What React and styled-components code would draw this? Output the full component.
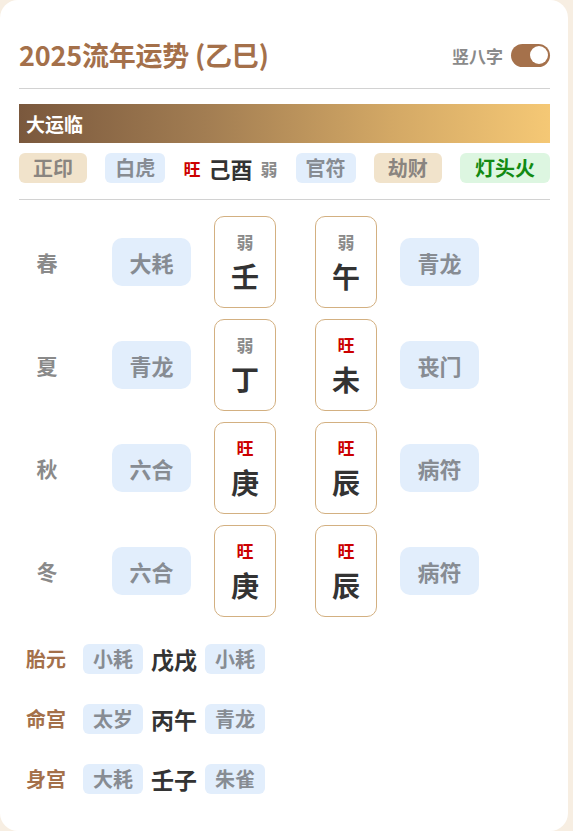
import styled, { createGlobalStyle } from 'styled-components';

const GlobalStyle = createGlobalStyle`
  html, body {
    margin: 0;
    padding: 0;
    background: #f7eee2;
  }
  body {
    font-family: "Noto Sans CJK SC", "Noto Sans", sans-serif;
  }
`;

const seasons = [
  { name: '春', left: '大耗', right: '青龙', stem: ['弱', '壬'], branch: ['弱', '午'] },
  { name: '夏', left: '青龙', right: '丧门', stem: ['弱', '丁'], branch: ['旺', '未'] },
  { name: '秋', left: '六合', right: '病符', stem: ['旺', '庚'], branch: ['旺', '辰'] },
  { name: '冬', left: '六合', right: '病符', stem: ['旺', '庚'], branch: ['旺', '辰'] },
];

const palaces = [
  { name: '胎元', left: '小耗', pillar: '戊戌', right: '小耗' },
  { name: '命宫', left: '太岁', pillar: '丙午', right: '青龙' },
  { name: '身宫', left: '大耗', pillar: '壬子', right: '朱雀' },
];

export default function App() {
  return (
    <>
      <GlobalStyle />
      <Card>
        <Header>
          <Title>2025流年运势 (乙巳)</Title>
          <ToggleWrap>
            <span>竖八字</span>
            <Toggle>
              <Knob />
            </Toggle>
          </ToggleWrap>
        </Header>
        <Divider />

        <Banner>大运临</Banner>
        <TagRow>
          <Tag $tone="beige" $pad={14}>正印</Tag>
          <Tag $tone="blue" $pad={10}>白虎</Tag>
          <DayunPillar>
            <Strength $strong>旺</Strength>
            <PillarText>己酉</PillarText>
            <Strength>弱</Strength>
          </DayunPillar>
          <Tag $tone="blue" $pad={10}>官符</Tag>
          <Tag $tone="beige" $pad={14}>劫财</Tag>
          <Tag $tone="green" $pad={15}>灯头火</Tag>
        </TagRow>
        <Divider />

        <SeasonGrid>
          {seasons.map((s) => (
            <SeasonRow key={s.name}>
              <SeasonLabel>{s.name}</SeasonLabel>
              <ShenTag>{s.left}</ShenTag>
              <PillarPair>
                {[s.stem, s.branch].map(([st, ch], i) => (
                  <PillarBox key={i}>
                    <BoxStrength $strong={st === '旺'}>{st}</BoxStrength>
                    <BoxChar>{ch}</BoxChar>
                  </PillarBox>
                ))}
              </PillarPair>
              <ShenTag>{s.right}</ShenTag>
            </SeasonRow>
          ))}
        </SeasonGrid>

        <PalaceList>
          {palaces.map((p) => (
            <PalaceRow key={p.name}>
              <PalaceLabel>{p.name}</PalaceLabel>
              <Tag $tone="blue" $pad={10}>{p.left}</Tag>
              <PalacePillar>{p.pillar}</PalacePillar>
              <Tag $tone="blue" $pad={10}>{p.right}</Tag>
            </PalaceRow>
          ))}
        </PalaceList>
      </Card>
    </>
  );
}

const tones = {
  beige: { bg: '#f1e3cb', fg: '#8a8580' },
  blue: { bg: '#e2eefc', fg: '#878c93' },
  green: { bg: '#ddf6e1', fg: '#128a12' },
};

const Card = styled.div`
  width: 568px;
  box-sizing: border-box;
  background: #fff;
  border-radius: 18px;
  padding: 37px 18px 37px 19px;
`;

const Header = styled.div`
  height: 36px;
  display: flex;
  align-items: center;
  justify-content: space-between;
`;

const Title = styled.h1`
  margin: 0;
  font-size: 27px;
  font-weight: 700;
  color: #a4704a;
  line-height: 36px;
  letter-spacing: -0.2px;
`;

const ToggleWrap = styled.div`
  display: flex;
  align-items: center;
  gap: 8px;
  font-size: 17px;
  font-weight: 700;
  color: #8a8a8a;
`;

const Toggle = styled.div`
  width: 39px;
  height: 23px;
  border-radius: 12px;
  background: #a5714b;
  display: flex;
  align-items: center;
  justify-content: flex-end;
  padding: 0 2px;
  box-sizing: border-box;
`;

const Knob = styled.div`
  width: 18px;
  height: 18px;
  border-radius: 50%;
  background: #fff;
`;

const Divider = styled.div`
  height: 1px;
  background: #d2d2d2;
  margin-top: 15px;
`;

const Banner = styled.div`
  margin-top: 15px;
  height: 39px;
  display: flex;
  align-items: center;
  padding-left: 7px;
  background: linear-gradient(90deg, #7a583d 0%, #a27d52 35%, #d3a865 70%, #f5c875 100%);
  color: #fff;
  font-size: 19px;
  font-weight: 700;
`;

const TagRow = styled.div`
  margin-top: 9px;
  margin-bottom: 3px;
  display: flex;
  align-items: center;
  justify-content: space-between;
`;

const Tag = styled.span`
  height: 30px;
  display: inline-flex;
  align-items: center;
  justify-content: center;
  padding: 0 ${(p) => p.$pad}px;
  border-radius: 6px;
  background: ${(p) => tones[p.$tone].bg};
  color: ${(p) => tones[p.$tone].fg};
  font-size: 20px;
  font-weight: 700;
  line-height: 1;
`;

const DayunPillar = styled.div`
  display: flex;
  align-items: center;
  gap: 8px;
`;

const Strength = styled.span`
  font-size: 17px;
  font-weight: 700;
  color: ${(p) => (p.$strong ? '#cc0000' : '#8a8a8a')};
`;

const PillarText = styled.span`
  font-size: 22px;
  font-weight: 700;
  color: #333;
`;

const SeasonGrid = styled.div`
  margin-top: 16px;
  display: flex;
  flex-direction: column;
  gap: 11px;
`;

const SeasonRow = styled.div`
  display: flex;
  align-items: center;
`;

const SeasonLabel = styled.div`
  width: 56px;
  margin-right: 37px;
  text-align: center;
  font-size: 21px;
  font-weight: 700;
  color: #8a8a8a;
`;

const ShenTag = styled.div`
  width: 79px;
  height: 48px;
  border-radius: 10px;
  background: #e2eefc;
  color: #878c93;
  display: flex;
  align-items: center;
  justify-content: center;
  font-size: 22px;
  font-weight: 700;
`;

const PillarPair = styled.div`
  display: flex;
  gap: 39px;
  margin: 0 23px;
`;

const PillarBox = styled.div`
  width: 62px;
  height: 92px;
  box-sizing: border-box;
  border: 1px solid #d3b081;
  border-radius: 10px;
  display: flex;
  flex-direction: column;
  align-items: center;
  justify-content: center;
  gap: 8px;
`;

const BoxStrength = styled.span`
  font-size: 17px;
  line-height: 20px;
  font-weight: 700;
  color: ${(p) => (p.$strong ? '#cc0000' : '#8a8a8a')};
`;

const BoxChar = styled.span`
  font-size: 28px;
  line-height: 32px;
  font-weight: 700;
  color: #333;
`;

const PalaceList = styled.div`
  margin-top: 27px;
  display: flex;
  flex-direction: column;
  gap: 30px;
`;

const PalaceRow = styled.div`
  height: 30px;
  display: flex;
  align-items: center;
  gap: 8px;
  line-height: 30px;
`;

const PalaceLabel = styled.span`
  margin-left: 7px;
  margin-right: 9px;
  font-size: 20px;
  font-weight: 700;
  color: #a4704a;
`;

const PalacePillar = styled.span`
  font-size: 23px;
  font-weight: 700;
  color: #333;
`;
